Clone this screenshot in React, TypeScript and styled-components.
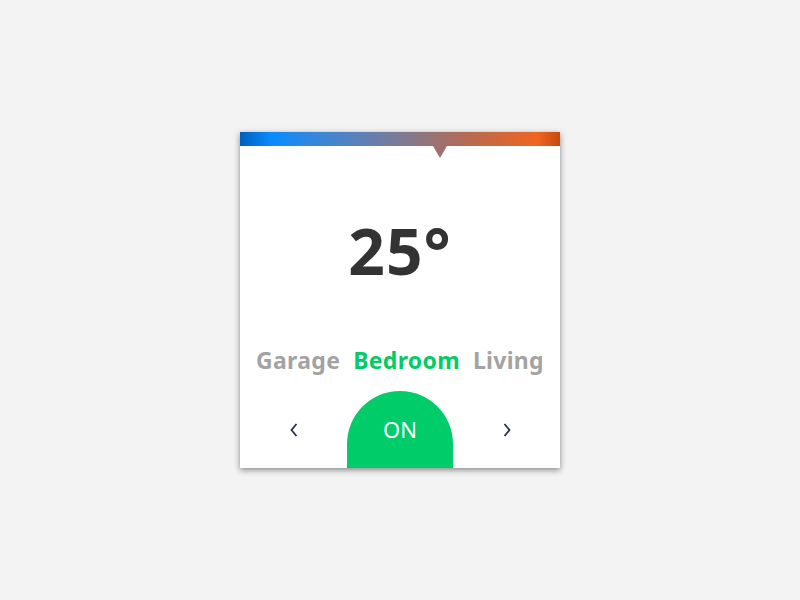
import React from "react";
import styled, { createGlobalStyle } from "styled-components";

const Global = createGlobalStyle`
  html, body { margin: 0; padding: 0; }
  body {
    background: #f3f3f3;
    font-family: "Noto Sans", "Open Sans", sans-serif;
  }
`;

const Page = styled.div`
  min-height: 100vh;
  display: flex;
  align-items: center;
  justify-content: center;
`;

const Card = styled.div`
  width: 320px;
  height: 336px;
  background: #ffffff;
  box-shadow: 0 2px 6px rgba(0, 0, 0, 0.45);
  display: flex;
  flex-direction: column;
  overflow: hidden;
`;

const Bar = styled.div`
  position: relative;
  height: 14px;
  flex: none;
  background: linear-gradient(
    to right,
    #0060bd 0%,
    #0a8cff 10%,
    #3a86d8 25%,
    #7d7a96 50%,
    #b86a50 72%,
    #f06420 93%,
    #c44a10 100%
  );
`;

const Pointer = styled.div<{ $pos: number }>`
  position: absolute;
  top: 14px;
  left: ${(p) => p.$pos}px;
  width: 0;
  height: 0;
  border-left: 7px solid transparent;
  border-right: 7px solid transparent;
  border-top: 12px solid #a07070;
  transform: translateX(-7px);
`;

const Temp = styled.div`
  margin-top: 73px;
  text-align: center;
  font-size: 64px;
  line-height: 1;
  font-weight: 700;
  letter-spacing: 1px;
  color: #333333;
`;

const Rooms = styled.div`
  margin-top: 66px;
  display: flex;
  justify-content: center;
  gap: 13px;
`;

const Room = styled.span<{ $active?: boolean }>`
  font-size: 23px;
  font-weight: 700;
  line-height: 1;
  letter-spacing: 0.3px;
  color: ${(p) => (p.$active ? "#00cc66" : "#a3a3a3")};
`;

const Controls = styled.div`
  margin-top: auto;
  display: grid;
  grid-template-columns: 1fr 106px 1fr;
  height: 77px;
`;

const Arrow = styled.button`
  border: none;
  background: transparent;
  padding: 0;
  display: flex;
  align-items: center;
  justify-content: center;
  cursor: pointer;
`;

const Power = styled.button`
  border: none;
  background: #00cc6a;
  border-radius: 53px 53px 0 0;
  color: #ffffff;
  font-family: "Noto Sans", "Open Sans", sans-serif;
  font-size: 22px;
  font-weight: 400;
  padding: 0 0 2px;
  cursor: pointer;
`;

const Chevron = ({ dir }: { dir: "left" | "right" }) => (
  <svg width="10" height="16" viewBox="0 0 10 16">
    <path
      d={dir === "left" ? "M7.5 2 L2.5 8 L7.5 14" : "M2.5 2 L7.5 8 L2.5 14"}
      fill="none"
      stroke="#26304a"
      strokeWidth="1.8"
    />
  </svg>
);

export default function App() {
  return (
    <>
      <Global />
      <Page>
        <Card>
          <Bar>
            <Pointer $pos={200} />
          </Bar>
          <Temp>25°</Temp>
          <Rooms>
            <Room>Garage</Room>
            <Room $active>Bedroom</Room>
            <Room>Living</Room>
          </Rooms>
          <Controls>
            <Arrow aria-label="previous">
              <Chevron dir="left" />
            </Arrow>
            <Power>ON</Power>
            <Arrow aria-label="next">
              <Chevron dir="right" />
            </Arrow>
          </Controls>
        </Card>
      </Page>
    </>
  );
}
